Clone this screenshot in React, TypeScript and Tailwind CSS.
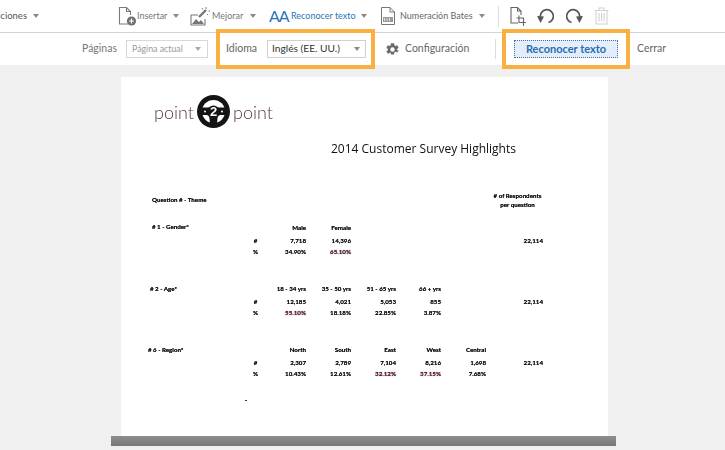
const ui = { fontFamily: 'Lato, "Open Sans", sans-serif' };

function Caret({ className = "" }: { className?: string }) {
  return <span className={`h-0 w-0 shrink-0 border-x-[3px] border-t-[4px] border-x-transparent border-t-[#8a8a8a] ${className}`} />;
}

function InsertIcon() {
  return (
    <svg width="19" height="21" viewBox="0 0 19 21" fill="none" stroke="#7a7a7a" strokeWidth="1.1" className="shrink-0">
      <path d="M10 18H1.500V1.500h7l4 4V9M8.500 1.500v4h4" />
      <circle cx="13.500" cy="15" r="4.600" fill="#6f6f6f" stroke="none" />
      <path d="M13.500 12.500v5M11 15h5" stroke="#fff" strokeWidth="1.200" />
    </svg>
  );
}

function EnhanceIcon() {
  return (
    <svg width="20" height="21" viewBox="0 0 20 21" fill="none" stroke="#777" strokeWidth="1.100" className="shrink-0">
      <path d="M1 9h7M1 9v10h14v-6" />
      <path d="M2 18l4-5 3 3 2-2 3 4z" fill="#777" stroke="none" />
      <path d="M9 11l7-7" strokeWidth="2.400" />
      <path d="M16 1v2M12 2l1 1.500M18.500 5h1.500M17 8l1 1" strokeWidth="1" />
    </svg>
  );
}

function BatesIcon() {
  return (
    <svg width="14" height="18" viewBox="0 0 14 18" fill="none" stroke="#777" strokeWidth="1" className="shrink-0">
      <path d="M.5.5h8.500l4.500 4.500v12.500H.5zM9 .5V5h4.500" />
      <rect x="2" y="10" width="10" height="5" fill="#999" stroke="none" />
      <path d="M3.500 11v3M6 11v3M8.500 11v3" stroke="#fff" strokeWidth=".7" />
    </svg>
  );
}

function CropIcon() {
  return (
    <svg width="17" height="21" viewBox="0 0 17 21" fill="none" stroke="#666" strokeWidth="1.100" className="shrink-0">
      <path d="M8 17H1V1.500h6.500l3.500 3.500v4M7.500 1.500V5H11" />
      <path d="M9 9.500v7h7M6.500 12H13.500v8" />
    </svg>
  );
}

function Undo({ flip = false }: { flip?: boolean }) {
  return (
    <svg width="17" height="16" viewBox="0 0 17 16" fill="none" stroke="#555" strokeWidth="1.700" className={`shrink-0 ${flip ? "-scale-x-100" : ""}`}>
      <path d="M3.500 9.500A6.500 6.500 0 1 1 11.500 14.500" />
      <path d="M0 8l7 .5-3.500 6.500z" fill="#555" stroke="none" />
    </svg>
  );
}

function TrashIcon() {
  return (
    <svg width="15" height="18" viewBox="0 0 15 18" fill="none" stroke="#d2d2d2" strokeWidth="1.100" className="shrink-0">
      <path d="M.5 3.500h14M5 3.500V1h5v2.500M2 3.500V17h11V3.500M5 6v8.500M7.500 6v8.500M10 6v8.500" />
    </svg>
  );
}

function Gear() {
  return (
    <svg width="15" height="15" viewBox="0 0 24 24" fill="#6b6b6b" className="shrink-0">
      <path d="M19.400 13a7.500 7.500 0 0 0 0-2l2.400-1.900-2.300-4-2.900 1.200a7.500 7.500 0 0 0-1.700-1L14.500 2h-5l-.4 3.300a7.500 7.500 0 0 0-1.700 1L4.500 5.100l-2.300 4L4.600 11a7.500 7.500 0 0 0 0 2l-2.400 1.900 2.300 4 2.900-1.200a7.500 7.500 0 0 0 1.700-1l.4 3.300h5l.4-3.300a7.500 7.500 0 0 0 1.700-1l2.900 1.200 2.300-4zM12 15.500a3.500 3.500 0 1 1 0-7 3.500 3.500 0 0 1 0 7z" />
    </svg>
  );
}

function Wheel() {
  return (
    <svg width="33" height="33" viewBox="0 0 33 33" className="shrink-0">
      <circle cx="16.500" cy="16.500" r="16.500" fill="#141416" />
      <circle cx="16.500" cy="16.500" r="11.500" fill="#fff" />
      <path d="M3 12.500h27v7.500h-6.500c-1.500 0-2.500 1-3 3l-.5 7h-7l-.5-7c-.5-2-1.500-3-3-3H3z" fill="#141416" />
      <circle cx="16.500" cy="16.500" r="6" fill="#141416" />
      <circle cx="8" cy="16.500" r="1" fill="#fff" />
      <circle cx="25" cy="16.500" r="1" fill="#fff" />
      <text x="16.500" y="21" textAnchor="middle" fontSize="13" fontWeight="700" fill="#fff" fontFamily="Liberation Sans, sans-serif">2</text>
    </svg>
  );
}

type Row = { cells: string[]; hot?: number[]; total?: string; mark?: string; label?: string };

const sections: { label: string; labelClass: string; head: string[]; rows: Row[]; className: string }[] = [
  {
    label: "# 1 - Gender*",
    labelClass: "pl-[31px] -translate-y-[1px]",
    head: ["Male", "Female"],
    className: "mt-[12px]",
    rows: [
      { mark: "#", cells: ["7,718", "14,396"], total: "22,114" },
      { mark: "%", cells: ["34.90%", "65.10%"], hot: [1] },
    ],
  },
  {
    label: "# 2 - Age*",
    labelClass: "pl-[29px]",
    head: ["18 - 34 yrs", "35 - 50 yrs", "51 - 65 yrs", "66 + yrs"],
    className: "mt-[26px]",
    rows: [
      { mark: "#", cells: ["12,185", "4,021", "5,053", "855"], total: "22,114" },
      { mark: "%", cells: ["55.10%", "18.18%", "22.85%", "3.87%"], hot: [0] },
    ],
  },
  {
    label: "# 6 - Region*",
    labelClass: "pl-[27px]",
    head: ["North", "South", "East", "West", "Central"],
    className: "mt-[26px]",
    rows: [
      { mark: "#", cells: ["2,307", "2,789", "7,104", "8,216", "1,698"], total: "22,114" },
      { mark: "%", cells: ["10.43%", "12.61%", "32.12%", "37.15%", "7.68%"], hot: [2, 3] },
    ],
  },
];

function DataRow({ label, labelClass, mark, cells, hot = [], total }: Row & { labelClass?: string }) {
  const slots = [0, 1, 2, 3, 4];
  return (
    <div className="flex h-[11px] items-center [text-shadow:0_0_0.5px_#333]">
      <div className={`w-[130px] ${labelClass ?? ""}`}>{label}</div>
      <div className="w-[9px] text-center">{mark}</div>
      <div className="flex">
        {slots.map((i) => (
          <div
            key={i}
            className={`text-right ${i === 0 ? "w-[46px]" : "w-[45px]"} ${hot.includes(i) ? "text-[#4a1a24] [text-shadow:0_0_1px_#6b2a34]" : ""}`}
          >
            {cells[i]}
          </div>
        ))}
      </div>
      <div className="w-[57px] text-right">{total}</div>
    </div>
  );
}

export default function App() {
  return (
    <div className="flex h-[450px] w-[725px] flex-col overflow-hidden bg-[#f0f0f0] text-[#666]" style={ui}>
      <div className="flex h-[33px] shrink-0 items-center whitespace-nowrap border-b border-[#d4d4d4] bg-white text-[9px] text-[#777]">
        <span className="flex w-[27px] justify-end text-[9.500px] leading-none text-[#555]">ciones</span>
        <Caret className="ml-[6px]" />
        <div className="ml-[79px]"><InsertIcon /></div>
        <span className="w-[30px]">Insertar</span>
        <Caret className="ml-[6px]" />
        <div className="ml-[11px]"><EnhanceIcon /></div>
        <span className="ml-[2px] w-[32px]">Mejorar</span>
        <Caret className="ml-[6px]" />
        <span className="ml-[13px] w-[17px] text-[16px] leading-none tracking-[-1px] text-[#2a76b8]">AA</span>
        <span className="ml-[5px] w-[64px] text-[#2a76b8]">Reconocer texto</span>
        <Caret className="ml-[6px] border-t-[#2a76b8]" />
        <div className="ml-[14px]"><BatesIcon /></div>
        <span className="ml-[5px] w-[72px] text-[#666]">Numeración Bates</span>
        <Caret className="ml-[7px]" />
        <div className="ml-[13px] h-[21px] w-px shrink-0 bg-[#dcdcdc]" />
        <div className="ml-[11px]"><CropIcon /></div>
        <div className="ml-[10px]"><Undo /></div>
        <div className="ml-[12px]"><Undo flip /></div>
        <div className="ml-[11px]"><TrashIcon /></div>
      </div>

      <div className="flex h-[32px] shrink-0 items-center whitespace-nowrap bg-white text-[10.500px]">
        <span className="ml-[82px] w-[34px] text-[#777]">Páginas</span>
        <div className="ml-[10px] flex h-[18px] w-[82px] shrink-0 items-center justify-between border border-[#d8d8d8] pl-[5px] pr-[6px] text-[8.800px] text-[#999]">
          Página actual
          <Caret className="border-t-[#aaa]" />
        </div>
        <div className="z-10 ml-[8px] flex h-[40px] w-[159px] shrink-0 items-center border-[4px] border-[#f9b040] pl-[6px]">
          <span className="w-[31px] text-[#666]">Idioma</span>
          <div className="ml-[10px] flex h-[18px] w-[99px] shrink-0 items-center justify-between border border-[#d0d0d0] pl-[4px] pr-[5px] text-[10.200px] text-[#333]">
            Inglés (EE. UU.)
            <Caret />
          </div>
        </div>
        <div className="ml-[10px]"><Gear /></div>
        <span className="ml-[5px] w-[64px] text-[#666]">Configuración</span>
        <div className="ml-[26px] h-[20px] w-px shrink-0 bg-[#dcdcdc]" />
        <div className="z-10 ml-[6px] flex h-[40px] w-[128px] shrink-0 items-center border-[4px] border-[#f9b040] pl-[8px]">
          <div className="flex h-[18px] w-[104px] shrink-0 items-center justify-center border border-dotted border-[#3f6fa8] bg-[#e3eefa] text-[11px] font-bold text-[#2a6db0]">
            Reconocer texto
          </div>
        </div>
        <span className="ml-[7px] text-[#666]">Cerrar</span>
      </div>

      <div className="flex flex-1 flex-col items-center pt-[12px]">
        <div className="ml-[4px] h-[359px] w-[487px] shrink-0 bg-white pt-[18px] text-[6.200px] font-bold text-[#111] blur-[0.3px]">
          <div className="ml-[33px] flex h-[33px] items-center">
            <span className="w-[39px] text-[18px] font-light leading-none text-[#5a3b3b]">point</span>
            <div className="ml-[4px]"><Wheel /></div>
            <span className="ml-[3px] text-[18px] font-light leading-none text-[#5a3b3b]">point</span>
          </div>
          <div
            className="ml-[210px] mt-[12px] whitespace-nowrap text-[12px] font-normal leading-[18px] text-[#111]"
            style={{ fontFamily: '"Open Sans", sans-serif' }}
          >
            2014 Customer Survey Highlights
          </div>
          <div className="mt-[32px] flex h-[20px] items-center [text-shadow:0_0_0.5px_#333]">
            <span className="ml-[31px] w-[321px]">Question # - Theme</span>
            <span className="w-[89px] text-center leading-[9px]">
              # of Respondents
              <br />
              per question
            </span>
          </div>
          {sections.map((s) => (
            <div key={s.label} className={s.className}>
              <DataRow label={s.label} labelClass={s.labelClass} cells={s.head} />
              <div className="mt-[2px]">
                {s.rows.map((r) => (
                  <DataRow key={r.mark} {...r} />
                ))}
              </div>
            </div>
          ))}
          <div className="ml-[124px] mt-[21px] h-px w-[2px] bg-[#333]" />
        </div>
        <div className="ml-[2px] h-[10px] w-[505px] shrink-0 bg-gradient-to-b from-[#8e8e8e] to-[#777]" />
      </div>
    </div>
  );
}
